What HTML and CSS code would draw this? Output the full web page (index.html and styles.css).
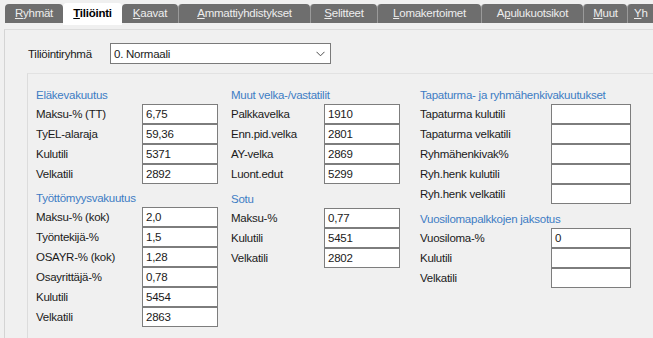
FILE: index.html
```html
<!DOCTYPE html>
<html lang="fi">
<head>
<meta charset="utf-8">
<title>Tiliöinti</title>
<link rel="stylesheet" href="styles.css">
</head>
<body>
<div class="tabs">
  <div class="tab w-ryhmat"><u>R</u>yhmät</div>
  <div class="tab active w-tilio"><u>T</u>iliöinti</div>
  <div class="tab w-kaavat"><u>K</u>aavat</div>
  <div class="tab w-ammatti"><u>A</u>mmattiyhdistykset</div>
  <div class="tab w-selitteet"><u>S</u>elitteet</div>
  <div class="tab w-loma"><u>L</u>omakertoimet</div>
  <div class="tab w-apu">A<u>p</u>ulukuotsikot</div>
  <div class="tab w-muut"><u>M</u>uut</div>
  <div class="tab w-yh"><u>Y</u>h</div>
</div>
<div class="page">
  <div class="toprow">
    <span class="toplabel">Tiliöintiryhmä</span>
    <div class="select">
      <span>0. Normaali</span>
      <svg class="chev" width="9" height="6" viewBox="0 0 9 6"><path d="M0.5 0.8 L4.5 4.8 L8.5 0.8" fill="none" stroke="#4d4d4d" stroke-width="1"/></svg>
    </div>
  </div>
  <div class="panel">
    <div class="col c1">
      <div class="section">
        <div class="heading">Eläkevakuutus</div>
        <div class="row"><span class="lbl">Maksu-% (TT)</span><div class="field">6,75</div></div>
        <div class="row"><span class="lbl">TyEL-alaraja</span><div class="field">59,36</div></div>
        <div class="row"><span class="lbl">Kulutili</span><div class="field">5371</div></div>
        <div class="row"><span class="lbl">Velkatili</span><div class="field">2892</div></div>
      </div>
      <div class="section">
        <div class="heading">Työttömyysvakuutus</div>
        <div class="row"><span class="lbl">Maksu-% (kok)</span><div class="field">2,0</div></div>
        <div class="row"><span class="lbl">Työntekijä-%</span><div class="field">1,5</div></div>
        <div class="row"><span class="lbl">OSAYR-% (kok)</span><div class="field">1,28</div></div>
        <div class="row"><span class="lbl">Osayrittäjä-%</span><div class="field">0,78</div></div>
        <div class="row"><span class="lbl">Kulutili</span><div class="field">5454</div></div>
        <div class="row"><span class="lbl">Velkatili</span><div class="field">2863</div></div>
      </div>
    </div>
    <div class="col c2">
      <div class="section">
        <div class="heading">Muut velka-/vastatilit</div>
        <div class="row"><span class="lbl">Palkkavelka</span><div class="field">1910</div></div>
        <div class="row"><span class="lbl">Enn.pid.velka</span><div class="field">2801</div></div>
        <div class="row"><span class="lbl">AY-velka</span><div class="field">2869</div></div>
        <div class="row"><span class="lbl">Luont.edut</span><div class="field">5299</div></div>
      </div>
      <div class="section s-low">
        <div class="heading">Sotu</div>
        <div class="row"><span class="lbl">Maksu-%</span><div class="field">0,77</div></div>
        <div class="row"><span class="lbl">Kulutili</span><div class="field">5451</div></div>
        <div class="row"><span class="lbl">Velkatili</span><div class="field">2802</div></div>
      </div>
    </div>
    <div class="col c3">
      <div class="section">
        <div class="heading">Tapaturma- ja ryhmähenkivakuutukset</div>
        <div class="row"><span class="lbl">Tapaturma kulutili</span><div class="field"></div></div>
        <div class="row"><span class="lbl">Tapaturma velkatili</span><div class="field"></div></div>
        <div class="row"><span class="lbl">Ryhmähenkivak%</span><div class="field"></div></div>
        <div class="row"><span class="lbl">Ryh.henk kulutili</span><div class="field"></div></div>
        <div class="row"><span class="lbl">Ryh.henk velkatili</span><div class="field"></div></div>
      </div>
      <div class="section s-low">
        <div class="heading">Vuosilomapalkkojen jaksotus</div>
        <div class="row"><span class="lbl">Vuosiloma-%</span><div class="field">0</div></div>
        <div class="row"><span class="lbl">Kulutili</span><div class="field"></div></div>
        <div class="row"><span class="lbl">Velkatili</span><div class="field"></div></div>
      </div>
    </div>
  </div>
</div>
</body>
</html>
```

FILE: styles.css
```css
html, body {
  margin: 0;
  padding: 0;
  width: 653px;
  height: 338px;
  overflow: hidden;
  background: #f0f0f0;
  font-family: "Liberation Sans", Arial, sans-serif;
  font-size: 11.5px;
  letter-spacing: -0.25px;
  color: #1a1a1a;
}

.tabs {
  display: flex;
  height: 23px;
  padding-left: 5px;
  box-sizing: border-box;
  padding-top: 4px;
  white-space: nowrap;
  align-items: flex-start;
}

.tab {
  flex: none;
  height: 19px;
  line-height: 19px;
  box-sizing: border-box;
  background: #6e6e6e;
  color: #ededed;
  text-align: center;
  border-radius: 4px 4px 0 0;
  border-left: 1px solid #9a9a9a;
  overflow: hidden;
}

.tab:first-child { border-left: none; }

.tab.active {
  background: #ffffff;
  color: #000;
  font-weight: bold;
  height: 22px;
  margin-top: -1px;
  line-height: 21px;
  border-left: none;
}

.tab.active + .tab { border-left: none; }

.w-ryhmat { width: 58px; }
.w-tilio { width: 59px; }
.w-kaavat { width: 56px; }
.w-ammatti { width: 132px; }
.w-selitteet { width: 67px; }
.w-loma { width: 104px; }
.w-apu { width: 102px; }
.w-muut { width: 44px; }
.w-yh { width: 26px; text-align: left; padding-left: 6px; border-radius: 4px 0 0 0; }

.page {
  margin-top: 6px;
  margin-left: 4px;
  border-top: 1px solid #dcdcdc;
  border-left: 1px solid #d4d4d4;
  height: 320px;
}

.toprow {
  display: flex;
  align-items: center;
  margin-top: 13px;
  padding-left: 23px;
  height: 21px;
}

.toplabel {
  width: 82px;
  flex: none;
}

.select {
  width: 221px;
  height: 21px;
  box-sizing: border-box;
  border: 1px solid #7a7a7a;
  background: #fff;
  display: flex;
  align-items: center;
  justify-content: space-between;
  padding: 0 5px 0 3px;
}

.chev { display: block; }

.panel {
  margin-top: 9px;
  margin-left: 22px;
  border-top: 1px solid #e2e2e2;
  border-left: 1px solid #dcdcdc;
  padding: 13px 0 0 8px;
  display: grid;
  grid-template-columns: 195px 189px 211px;
  align-items: start;
  height: 260px;
}

.section + .section { margin-top: 6px; }
.section.s-low { margin-top: 7px; }

.heading {
  height: 17px;
  line-height: 17px;
  color: #3d7cc4;
}

.row {
  display: flex;
  align-items: center;
  height: 20px;
}

.lbl { flex: none; }
.c1 .lbl { width: 106px; }
.c2 .lbl { width: 93px; }
.c3 .lbl { width: 131px; }

.field {
  flex: none;
  height: 20px;
  box-sizing: border-box;
  border: 1px solid #7d7d7d;
  background: #fff;
  line-height: 18px;
  padding-left: 3px;
  width: 76px;
}

.c3 .field { width: 80px; }
```
